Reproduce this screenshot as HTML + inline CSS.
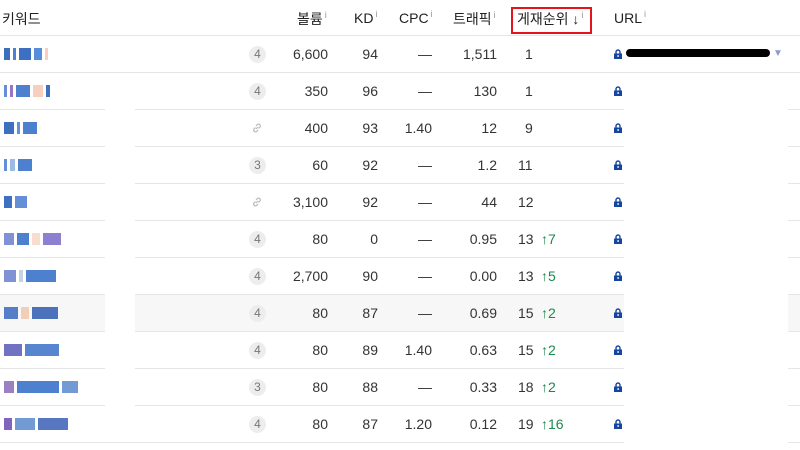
<!DOCTYPE html>
<html><head><meta charset="utf-8"><style>
*{margin:0;padding:0;box-sizing:border-box}
body{width:800px;height:450px;overflow:hidden;background:#fff;font-family:"Liberation Sans","Noto Sans CJK KR",sans-serif;color:#333;font-size:14px;position:relative}
.a{position:absolute}
.h{top:9px;font-size:14px;color:#222;font-weight:normal}
.h sup{font-size:9px;color:#999;vertical-align:6px;margin-left:2px}
.line{position:absolute;left:0;width:800px;height:1px;background:#e6e6e6}
.r{position:absolute;left:0;width:800px;height:37px}
.r span{position:absolute;top:10px;line-height:17px}
.vol{right:472px;text-align:right}
.kd{right:422px}
.cpc{right:368px}
.tr{right:303px}
.pos{left:518px}
.up{left:541px;color:#1a8a4a}
.badge{left:249px;top:10px!important;width:17px;height:17px;border-radius:50%;background:#ededed;color:#777;font-size:12px;text-align:center;line-height:17px!important}
.kw{left:4px;top:12px!important;height:12px;display:flex;gap:3px;opacity:.85}
.kw i{display:block;height:12px}
</style></head><body>
<div class="a h" style="left:2px">키워드</div>
<div class="a h" style="left:297px">볼륨<sup>i</sup></div>
<div class="a h" style="left:354px">KD<sup>i</sup></div>
<div class="a h" style="left:399px">CPC<sup>i</sup></div>
<div class="a h" style="left:453px">트래픽<sup>i</sup></div>
<div class="a h" style="left:517px">게재순위 <span style="font-weight:bold">↓</span><sup>i</sup></div>
<div class="a h" style="left:614px">URL<sup>i</sup></div>
<div class="a" style="left:511px;top:7px;width:81px;height:27px;border:2px solid #e3141b"></div>

<div class="line" style="top:35px"></div>
<div class="line" style="top:72px"></div>
<div class="line" style="top:109px"></div>
<div class="line" style="top:146px"></div>
<div class="line" style="top:183px"></div>
<div class="line" style="top:220px"></div>
<div class="line" style="top:257px"></div>
<div class="line" style="top:294px"></div>
<div class="line" style="top:331px"></div>
<div class="line" style="top:368px"></div>
<div class="line" style="top:405px"></div>
<div class="line" style="top:442px"></div>
<div class="a" style="left:0;top:295px;width:800px;height:36px;background:#f7f7f7"></div>
<div class="a" style="left:624px;top:73px;width:164px;height:377px;background:#fff"></div>
<div class="a" style="left:105px;top:73px;width:30px;height:369px;background:#fff"></div>

<svg width="0" height="0" style="position:absolute"><defs><symbol id="lk" viewBox="0 0 8 10"><path d="M2 5V3a2 2 0 0 1 4 0V5" fill="none" stroke="#1446a0" stroke-width="1.4"/><rect x="0" y="4.5" width="8" height="5.5" fill="#1446a0"/><rect x="3.5" y="6" width="1.2" height="2" fill="#fff"/></symbol>
<symbol id="ln" viewBox="0 0 12 12"><path d="M5 7l2-2M4.5 5.5l-1.5 1.5a1.8 1.8 0 0 0 2.5 2.5L7 8M7.5 6.5l1.5-1.5a1.8 1.8 0 0 0-2.5-2.5L5 4" fill="none" stroke="#bbb" stroke-width="1.2"/></symbol></defs></svg>

<div class="r" style="top:36px">
<span class="kw"><i style="width:6px;background:#1a56b0"></i><i style="width:3px;background:#2e6bc7"></i><i style="width:12px;background:#1d58b8"></i><i style="width:8px;background:#3a7bd5"></i><i style="width:3px;background:#f7c7b5"></i></span>
<span class="badge">4</span><span class="vol">6,600</span><span class="kd">94</span><span class="cpc">—</span><span class="tr">1,511</span><span class="pos" style="left:525px">1</span>
<svg class="a" style="left:614px;top:13px" width="8" height="10"><use href="#lk"/></svg>
<span style="left:626px;top:13px;width:144px;height:8px;background:#000;border-radius:4px"></span>
<span style="left:773px;top:9px;color:#8a9bd0;font-size:10px">▼</span>
</div>
<div class="r" style="top:73px"><span class="kw"><i style="width:3px;background:#4a7bd0"></i><i style="width:3px;background:#8a5ac0"></i><i style="width:14px;background:#2e6bc7"></i><i style="width:10px;background:#f7c7b5"></i><i style="width:4px;background:#1d58b8"></i></span><span class="badge">4</span><span class="vol">350</span><span class="kd">96</span><span class="cpc">—</span><span class="tr">130</span><span class="pos" style="left:525px">1</span><svg class="a" style="left:614px;top:13px" width="8" height="10"><use href="#lk"/></svg></div>
<div class="r" style="top:110px"><span class="kw"><i style="width:10px;background:#1d58b8"></i><i style="width:3px;background:#4a7bd0"></i><i style="width:14px;background:#2e6bc7"></i></span><svg class="a" style="left:251px;top:12px" width="12" height="12"><use href="#ln"/></svg><span class="vol">400</span><span class="kd">93</span><span class="cpc">1.40</span><span class="tr">12</span><span class="pos" style="left:525px">9</span><svg class="a" style="left:614px;top:13px" width="8" height="10"><use href="#lk"/></svg></div>
<div class="r" style="top:147px"><span class="kw"><i style="width:3px;background:#4a7bd0"></i><i style="width:5px;background:#8aaee0"></i><i style="width:14px;background:#2e6bc7"></i></span><span class="badge">3</span><span class="vol">60</span><span class="kd">92</span><span class="cpc">—</span><span class="tr">1.2</span><span class="pos">11</span><svg class="a" style="left:614px;top:13px" width="8" height="10"><use href="#lk"/></svg></div>
<div class="r" style="top:184px"><span class="kw"><i style="width:8px;background:#1d58b8"></i><i style="width:12px;background:#4a7bd0"></i></span><svg class="a" style="left:251px;top:12px" width="12" height="12"><use href="#ln"/></svg><span class="vol">3,100</span><span class="kd">92</span><span class="cpc">—</span><span class="tr">44</span><span class="pos">12</span><svg class="a" style="left:614px;top:13px" width="8" height="10"><use href="#lk"/></svg></div>
<div class="r" style="top:221px"><span class="kw"><i style="width:10px;background:#6a7ed0"></i><i style="width:12px;background:#2e6bc7"></i><i style="width:8px;background:#f7d7c5"></i><i style="width:18px;background:#7a6ac8"></i></span><span class="badge">4</span><span class="vol">80</span><span class="kd">0</span><span class="cpc">—</span><span class="tr">0.95</span><span class="pos">13</span><span class="up">↑7</span><svg class="a" style="left:614px;top:13px" width="8" height="10"><use href="#lk"/></svg></div>
<div class="r" style="top:258px"><span class="kw"><i style="width:12px;background:#6a7ed0"></i><i style="width:4px;background:#bcd"></i><i style="width:30px;background:#2e6bc7"></i></span><span class="badge">4</span><span class="vol">2,700</span><span class="kd">90</span><span class="cpc">—</span><span class="tr">0.00</span><span class="pos">13</span><span class="up">↑5</span><svg class="a" style="left:614px;top:13px" width="8" height="10"><use href="#lk"/></svg></div>
<div class="r" style="top:295px"><span class="kw"><i style="width:14px;background:#3a6ac0"></i><i style="width:8px;background:#f0c8b0"></i><i style="width:26px;background:#2e5bb0"></i></span><span class="badge">4</span><span class="vol">80</span><span class="kd">87</span><span class="cpc">—</span><span class="tr">0.69</span><span class="pos">15</span><span class="up">↑2</span><svg class="a" style="left:614px;top:13px" width="8" height="10"><use href="#lk"/></svg></div>
<div class="r" style="top:332px"><span class="kw"><i style="width:18px;background:#5a5ab8"></i><i style="width:34px;background:#3a70c8"></i></span><span class="badge">4</span><span class="vol">80</span><span class="kd">89</span><span class="cpc">1.40</span><span class="tr">0.63</span><span class="pos">15</span><span class="up">↑2</span><svg class="a" style="left:614px;top:13px" width="8" height="10"><use href="#lk"/></svg></div>
<div class="r" style="top:369px"><span class="kw"><i style="width:10px;background:#8a6ab8"></i><i style="width:42px;background:#2e6bc7"></i><i style="width:16px;background:#5a8ad0"></i></span><span class="badge">3</span><span class="vol">80</span><span class="kd">88</span><span class="cpc">—</span><span class="tr">0.33</span><span class="pos">18</span><span class="up">↑2</span><svg class="a" style="left:614px;top:13px" width="8" height="10"><use href="#lk"/></svg></div>
<div class="r" style="top:406px"><span class="kw"><i style="width:8px;background:#6a4ab0"></i><i style="width:20px;background:#5a8ad0"></i><i style="width:30px;background:#3a60b8"></i></span><span class="badge">4</span><span class="vol">80</span><span class="kd">87</span><span class="cpc">1.20</span><span class="tr">0.12</span><span class="pos">19</span><span class="up">↑16</span><svg class="a" style="left:614px;top:13px" width="8" height="10"><use href="#lk"/></svg></div>
</body></html>
